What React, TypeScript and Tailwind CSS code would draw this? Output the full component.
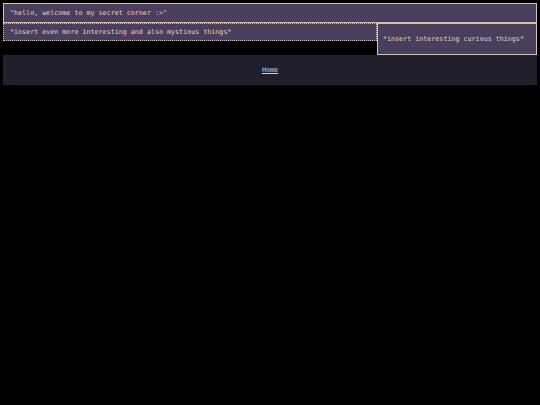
export default function App() {
  return (
    <div className="min-h-[405px] w-full bg-black p-[3px] font-['DejaVu_Sans_Mono','Liberation_Mono',monospace] text-[6.7px] text-[#e2d5bd]">
      {/* Greeting */}
      <div className="h-[20px] border-[1.5px] border-[#d8c4a2] bg-[#4a3e5e] px-[6px] pt-[1px] flex items-center">
        "hello, welcome to my secret corner :&gt;"
      </div>

      {/* Two boxes */}
      <div className="flex items-start">
        <div className="flex-1 h-[18px] border-[1.5px] border-dotted border-[#d8c4a2] bg-[#4a3e5e] px-[6px] pt-[1px] flex items-center">
          *insert even more interesting and also mystious things*
        </div>
        <div className="w-[160px] h-[32px] border-[1.5px] border-[#d8c4a2] bg-[#4a3e5e] px-[5px] pt-[1px] flex items-center">
          *insert interesting curious things*
        </div>
      </div>

      {/* Footer */}
      <footer className="h-[30px] bg-[#221e2c] flex items-center justify-center">
        <a href="#" className="underline text-[#d6d3de]">
          Home
        </a>
      </footer>
    </div>
  );
}
